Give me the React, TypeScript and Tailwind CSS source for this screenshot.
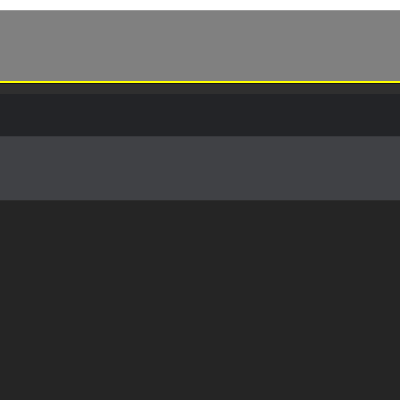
export default function App() {
  return (
    <div className="flex h-[400px] w-[400px] flex-col overflow-hidden bg-[#252525]">
      <div className="h-[10px] shrink-0 bg-white" />
      <div className="h-[71px] shrink-0 border-t border-[#9a9a9a] bg-[#808080]" />
      <div className="h-[2px] shrink-0 bg-[#ffff00]" />
      <div className="h-[1px] shrink-0 bg-[#151515]" />
      <div className="h-[10px] shrink-0 bg-[#2f2f2f]" />
      <div className="h-[42px] shrink-0 bg-[#232427]" />
      <div className="h-[64px] shrink-0 border-t border-[#38393d] bg-[#404145]" />
      <div className="h-[1px] shrink-0 bg-[#2d2d2d]" />
      <div className="flex-1 bg-[#252525]" />
    </div>
  );
}
